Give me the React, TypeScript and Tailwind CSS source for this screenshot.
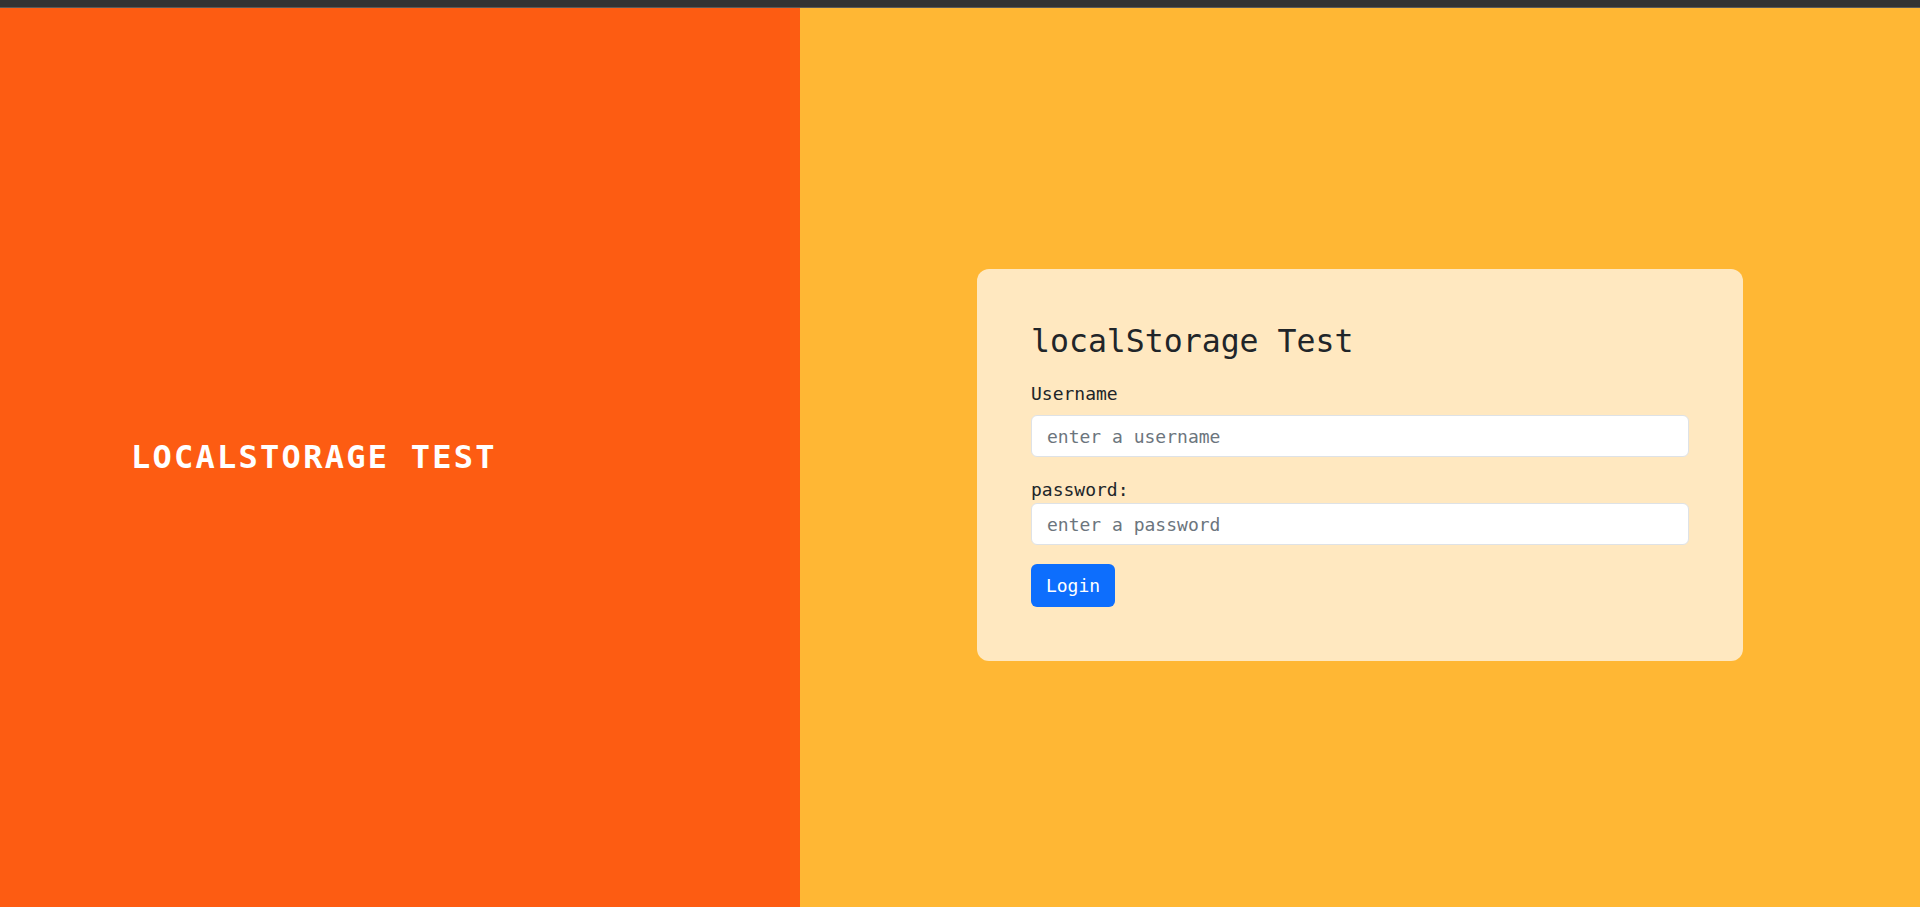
import React from "react";

export default function App() {
  return (
    <div className="flex h-[907px] w-[1920px] flex-col overflow-hidden font-['DejaVu_Sans_Mono',monospace] text-[#212529]">
      <div className="h-[8px] shrink-0 border-b border-[#5a5a5a] bg-[#333333]" />
      <div className="flex flex-1">
        <div className="flex w-[800px] items-center bg-[#FD5C12] pl-[131px]">
          <h1 className="text-[32px] font-bold uppercase leading-[1.2] tracking-[2.25px] text-white">
            localStorage Test
          </h1>
        </div>
        <div className="flex flex-1 items-center justify-center bg-[#FFB734] pt-[15px]">
          <div className="w-[766px] rounded-[12px] bg-[#FFE8C0] px-[54px] pt-[53px] pb-[54px]">
            <h2 className="mb-[20px] text-[31.5px] font-medium leading-[38px]">localStorage Test</h2>
            <form className="flex flex-col" onSubmit={(e) => e.preventDefault()}>
              <label className="mb-[8px] text-[18px] leading-[27px]">Username</label>
              <input
                type="text"
                placeholder="enter a username"
                className="h-[42px] w-full rounded-[6px] border border-[#dee2e6] bg-white px-[15px] text-[18px] outline-none placeholder:text-[#6c757d]"
              />
              <label className="mt-[19px] text-[18px] leading-[27px]">password:</label>
              <input
                type="password"
                placeholder="enter a password"
                className="h-[42px] w-full rounded-[6px] border border-[#dee2e6] bg-white px-[15px] text-[18px] outline-none placeholder:text-[#6c757d]"
              />
              <div className="mt-[19px]">
                <button
                  type="submit"
                  className="h-[43px] w-[84px] rounded-[6px] bg-[#0D6EFD] text-[18px] text-white"
                >
                  Login
                </button>
              </div>
            </form>
          </div>
        </div>
      </div>
    </div>
  );
}
